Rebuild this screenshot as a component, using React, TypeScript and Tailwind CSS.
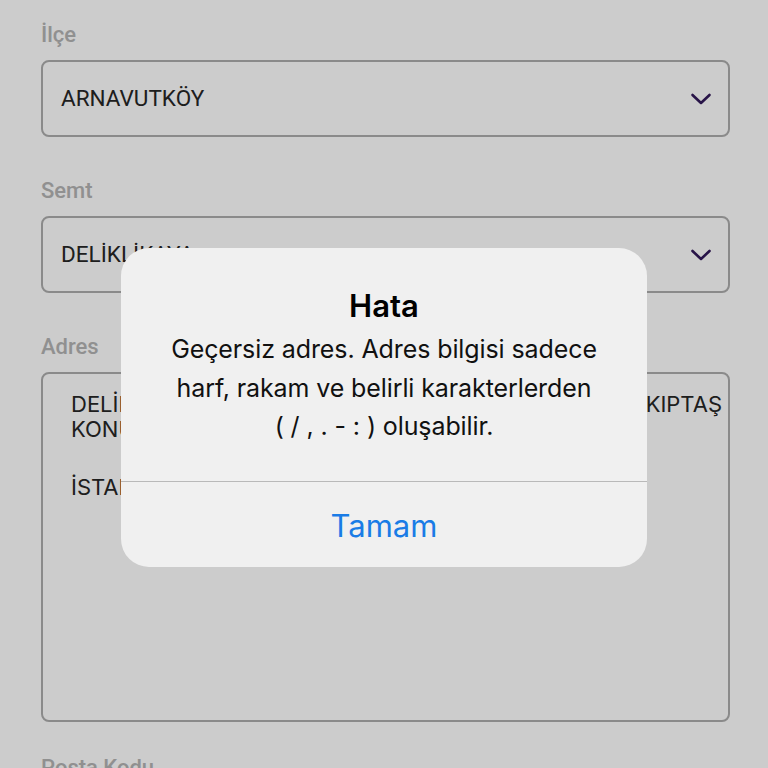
const fields = [
  { id: 1, label: 'İlçe', value: 'ARNAVUTKÖY' },
  { id: 2, label: 'Semt', value: 'DELİKLİKAYA' },
];

function Label({ text }: { text: string }) {
  return (
    <span className="block font-[Roboto,sans-serif] font-medium text-[22px] leading-[26px] text-[#b4b4b4]">
      {text}
    </span>
  );
}

function Chevron() {
  return (
    <svg width="22" height="14" viewBox="0 0 22 14" fill="none" className="text-[#33195a]">
      <polyline
        points="2.5,3 11,11 19.5,3"
        stroke="currentColor"
        strokeWidth="2.6"
        strokeLinecap="round"
        strokeLinejoin="round"
      />
    </svg>
  );
}

export default function App() {
  return (
    <div className="relative w-[768px] h-[768px] overflow-hidden bg-white">
      <div className="pl-[41px] pr-[38px] pt-[22px]">
        {fields.map((field) => (
          <div key={field.id} className="mb-[41px]">
            <Label text={field.label} />
            <div className="flex justify-between items-center h-[77px] rounded-lg border-2 border-[#adadad] pl-[18px] pr-[16px] mt-3">
              <span className="font-[Roboto,sans-serif] text-[22.5px] leading-none text-[#262626]">
                {field.value}
              </span>
              <Chevron />
            </div>
          </div>
        ))}
        <Label text="Adres" />
        <div className="h-[350px] rounded-lg border-2 border-[#adadad] pl-[28px] pr-[6px] pt-[18px] mt-3 font-[Inter,sans-serif] text-[22px] leading-[25px] text-[#262626]">
          <div className="flex justify-between">
            <span>DELİKLİKAYA MAH. HADIMKÖY YOLU</span>
            <span>KIPTAŞ</span>
          </div>
          <div>KONUTLARI B BLOK NO:4</div>
          <div className="mt-[33px]">İSTANBUL</div>
        </div>
        <div className="mt-[33px]">
          <Label text="Posta Kodu" />
        </div>
      </div>

      <div className="absolute inset-0 bg-black/20" />

      <div className="absolute left-[121px] top-[248px] w-[526px] rounded-[28px] bg-[#f0f0f0] font-[Inter,sans-serif] text-center">
        <div className="px-3 pt-[39px] pb-[35px]">
          <h2 className="font-semibold text-[31px] leading-[38px] text-black">Hata</h2>
          <p className="text-[25px] leading-[38.5px] text-[#111111] mt-[5px] tracking-[-0.1px]">
            Geçersiz adres. Adres bilgisi sadece
            <br />
            harf, rakam ve belirli karakterlerden
            <br />( / , . - : ) oluşabilir.
          </p>
        </div>
        <div className="border-t border-[#b9b9b9]" />
        <button className="w-full h-[85px] pt-[4px] text-[31px] text-[#1a7ce6] font-[Inter,sans-serif]">
          Tamam
        </button>
      </div>
    </div>
  );
}
